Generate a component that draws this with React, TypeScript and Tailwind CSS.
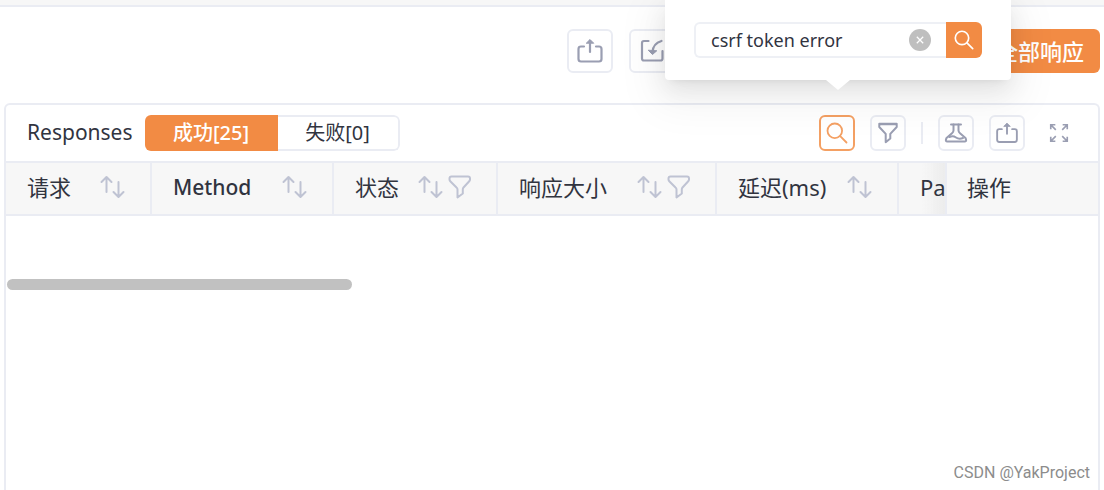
import { useState, type ReactNode } from "react";

type IconProps = { className?: string };

function ShareIcon({ className }: IconProps) {
  return (
    <svg
      viewBox="0 0 28 28"
      className={className}
      fill="none"
      stroke="currentColor"
      strokeWidth="2.200"
      strokeLinecap="round"
      strokeLinejoin="round"
    >
      <path d="M8 9.500H5Q2.500 9.500 2.500 12V22Q2.500 24.500 5 24.500H23Q25.500 24.500 25.500 22V12Q25.500 9.500 23 9.500H20" />
      <path d="M14 15V4" />
      <path d="M10.500 6L14 2.500L17.500 6Z" fill="currentColor" strokeWidth="1" />
    </svg>
  );
}

function ImportIcon({ className }: IconProps) {
  return (
    <svg
      viewBox="0 0 28 28"
      className={className}
      fill="none"
      stroke="currentColor"
      strokeWidth="2.200"
      strokeLinecap="round"
      strokeLinejoin="round"
    >
      <path d="M10.500 4H6Q4 4 4 6V21.500Q4 23.500 6 23.500H22.500Q24.500 23.500 24.500 21.500V14" />
      <path d="M23.500 4Q15 6.500 14.500 15" />
      <path d="M10.500 13.500L14.500 17.500L18.500 14Z" fill="currentColor" strokeWidth="1" />
    </svg>
  );
}

function SearchIcon({ className }: IconProps) {
  return (
    <svg
      viewBox="0 0 24 24"
      className={className}
      fill="none"
      stroke="currentColor"
      strokeWidth="1.800"
      strokeLinecap="round"
    >
      <circle cx="9.800" cy="9.800" r="7.300" />
      <path d="M15.200 15.200L21.500 21.500" />
    </svg>
  );
}

function FunnelIcon({ className }: IconProps) {
  return (
    <svg
      viewBox="0 0 24 24"
      className={className}
      fill="none"
      stroke="currentColor"
      strokeWidth="2.200"
      strokeLinejoin="round"
    >
      <path d="M2.500 2H21.500V5.500L14.500 13V18L9.500 22V13L2.500 5.500Z" />
      <path d="M2.500 2.500H21.500" />
    </svg>
  );
}

function RoundFunnelIcon({ className }: IconProps) {
  return (
    <svg
      viewBox="0 0 24 24"
      className={className}
      fill="none"
      stroke="currentColor"
      strokeWidth="2"
      strokeLinejoin="round"
    >
      <path d="M3.500 1.500H20Q22 1.500 22 3.500V4.500Q22 5.500 21 6.500L15.500 12.500Q14.800 13.300 14.800 14.500V18.500L9.500 22.500V14.500Q9.500 13.300 8.500 12.500L2.500 6.500Q1.500 5.500 1.500 4.500V3.500Q1.500 1.500 3.500 1.500Z" />
    </svg>
  );
}

function FlaskIcon({ className }: IconProps) {
  return (
    <svg
      viewBox="0 0 24 24"
      className={className}
      fill="none"
      stroke="currentColor"
      strokeWidth="2"
      strokeLinecap="round"
      strokeLinejoin="round"
    >
      <path d="M7 3.500H17" />
      <path d="M9.500 3.500V9.500Q9.500 11 8 12.200L2.500 17Q1 20.500 3 20.500H21Q23 20.500 21.500 17L16 12.200Q14.500 11 14.500 9.500V3.500" />
      <path d="M5.500 16Q9 14.500 12 16.500T19 17" />
    </svg>
  );
}

function ExpandIcon({ className }: IconProps) {
  return (
    <svg
      viewBox="0 0 24 24"
      className={className}
      fill="none"
      stroke="currentColor"
      strokeWidth="1.800"
    >
      <path d="M3 8V3H8M3 3L8.500 8.500M16 3H21V8M21 3L15.500 8.500M3 16V21H8M3 21L8.500 15.500M16 21H21V16M21 21L15.500 15.500" />
    </svg>
  );
}

function SortIcon({ className }: IconProps) {
  return (
    <svg
      viewBox="0 0 26 24"
      className={className}
      fill="none"
      stroke="currentColor"
      strokeWidth="2"
      strokeLinecap="round"
      strokeLinejoin="round"
    >
      <path d="M6.500 17V2.500M1.500 7L6.500 2L11.500 7" />
      <path d="M18.500 7V21.500M13.500 17L18.500 22L23.500 17" />
    </svg>
  );
}

type Column = {
  title: string;
  width: string;
  sortable?: boolean;
  filterable?: boolean;
};

const columns: Column[] = [
  { title: "请求", width: "w-[145px]", sortable: true },
  { title: "Method", width: "w-[182px]", sortable: true },
  { title: "状态", width: "w-[164px]", sortable: true, filterable: true },
  { title: "响应大小", width: "w-[219px]", sortable: true, filterable: true },
  { title: "延迟(ms)", width: "w-[182px]", sortable: true },
  { title: "Pa", width: "w-12" },
];

const tabs = [
  { key: "success", label: "成功[25]" },
  { key: "fail", label: "失败[0]" },
];

function ToolButton({
  label,
  active,
  children,
}: {
  label: string;
  active?: boolean;
  children: ReactNode;
}) {
  return (
    <button
      type="button"
      aria-label={label}
      className={`flex size-9 items-center justify-center rounded-md border-2 ${
        active ? "border-[#f4a063] text-[#f4a063]" : "border-[#eaecf3] text-[#9a9eb2]"
      }`}
    >
      {children}
    </button>
  );
}

function SearchPopover() {
  const [keyword, setKeyword] = useState("csrf token error");

  return (
    <div className="absolute top-0 right-[93px] z-20 w-[346px] rounded-b bg-white px-[29px] py-[22px] shadow-[0_4px_9px_-6px_rgba(0,0,0,0.12),0_9px_24px_rgba(0,0,0,0.08),0_14px_42px_12px_rgba(0,0,0,0.05)]">
      <div className="flex h-9">
        <div className="flex min-w-0 flex-1 items-center rounded-l-md border-2 border-r-0 border-[#eef0f5] px-[15px]">
          <input
            type="text"
            aria-label="搜索"
            value={keyword}
            onChange={(event) => setKeyword(event.target.value)}
            className="h-full min-w-0 flex-1 text-lg text-[#31343f] outline-none"
          />
          <button
            type="button"
            aria-label="清空"
            onClick={() => setKeyword("")}
            className="flex size-[22px] shrink-0 items-center justify-center rounded-full bg-[#bfbfbf] text-white"
          >
            <svg viewBox="0 0 10 10" className="size-2" stroke="currentColor" strokeWidth="1.600">
              <path d="M1 1L9 9M9 1L1 9" />
            </svg>
          </button>
        </div>
        <button
          type="button"
          aria-label="搜索"
          className="flex w-9 items-center justify-center rounded-r-md bg-[#f28b44] text-white"
        >
          <SearchIcon className="size-[22px]" />
        </button>
      </div>
      <div className="absolute top-full left-1/2 h-[10px] w-6 -translate-x-1/2 bg-white [clip-path:polygon(0_0,100%_0,50%_100%)]" />
    </div>
  );
}

export default function App() {
  const [tab, setTab] = useState("success");

  return (
    <div className="relative flex h-screen flex-col overflow-hidden bg-white font-['Noto_Sans','Noto_Sans_CJK_SC',sans-serif] text-[#31343f]">
      <div className="h-[7px] shrink-0 border-b-2 border-[#eaecf3] bg-[#f7f7f7]" />

      <div className="flex shrink-0 items-center justify-end pt-[22px] pr-1 pb-[30px]">
        <div className="mr-[305px] flex gap-4">
          <button
            type="button"
            aria-label="导出"
            className="flex h-11 w-[46px] items-center justify-center rounded-md border-2 border-[#eaecf3] text-[#9a9eb2]"
          >
            <ShareIcon className="size-7" />
          </button>
          <button
            type="button"
            aria-label="导入"
            className="flex h-11 w-[46px] items-center justify-center rounded-md border-2 border-[#eaecf3] text-[#9a9eb2]"
          >
            <ImportIcon className="size-7" />
          </button>
        </div>
        <button
          type="button"
          className="h-11 rounded-md bg-[#f28b44] px-4 text-[22px] leading-8 font-medium text-white"
        >
          全部响应
        </button>
      </div>

      <SearchPopover />

      <div className="mx-1 min-h-0 flex-1 overflow-hidden rounded-t-md border-2 border-b-0 border-[#eaecf3]">
        <div className="flex h-14 items-center pr-7 pl-[21px]">
          <span className="text-[21px]">Responses</span>
          <div className="ml-3 flex h-9 overflow-hidden rounded-md text-xl">
            {tabs.map((item) => (
              <button
                key={item.key}
                type="button"
                onClick={() => setTab(item.key)}
                className={
                  tab === item.key
                    ? "w-[133px] bg-[#f28b44] font-medium text-white"
                    : "w-[122px] rounded-r-md border-2 border-l-0 border-[#eaecf3]"
                }
              >
                {item.label}
              </button>
            ))}
          </div>

          <div className="ml-auto flex items-center gap-[15px]">
            <ToolButton label="搜索" active>
              <SearchIcon className="size-6" />
            </ToolButton>
            <ToolButton label="筛选">
              <FunnelIcon className="size-[22px]" />
            </ToolButton>
            <span className="h-[22px] w-[2px] bg-[#eaecf3]" />
            <ToolButton label="测试">
              <FlaskIcon className="size-6" />
            </ToolButton>
            <ToolButton label="导出">
              <ShareIcon className="size-6" />
            </ToolButton>
            <button type="button" aria-label="全屏" className="ml-2 text-[#9a9eb2]">
              <ExpandIcon className="block size-[22px]" />
            </button>
          </div>
        </div>

        <table className="w-full table-fixed border-collapse bg-[#f7f7f7]">
          <thead>
            <tr className="h-[53px] border-y-2 border-[#eaecf3] text-left text-[22px] leading-7">
              {columns.map((column) => (
                <th
                  key={column.title}
                  className={`overflow-hidden border-r-2 border-[#eaecf3] p-0 pb-1 pl-[21px] font-normal ${column.width} ${
                    column.sortable
                      ? "pr-6"
                      : "bg-linear-to-r from-transparent from-50% to-[#ececec]"
                  }`}
                >
                  <div className="flex items-center justify-between whitespace-nowrap">
                    <span className={column.title === "Method" ? "text-[21px] font-medium" : ""}>
                      {column.title}
                    </span>
                    <span className="flex gap-1 text-[#bfc3d3]">
                      {column.sortable && <SortIcon className="h-6 w-[26px]" />}
                      {column.filterable && <RoundFunnelIcon className="size-6" />}
                    </span>
                  </div>
                </th>
              ))}
              <th className="p-0 pb-1 pl-5 font-normal">操作</th>
            </tr>
          </thead>
        </table>

        <div className="mt-[63px] ml-px h-[11px] w-[345px] rounded-full bg-[#c1c1c1]" />
      </div>

      <span className="absolute right-[14px] bottom-[7px] font-[Roboto,'Liberation_Sans',sans-serif] text-base leading-5 text-[#8c8c8c]">
        CSDN @YakProject
      </span>
    </div>
  );
}
